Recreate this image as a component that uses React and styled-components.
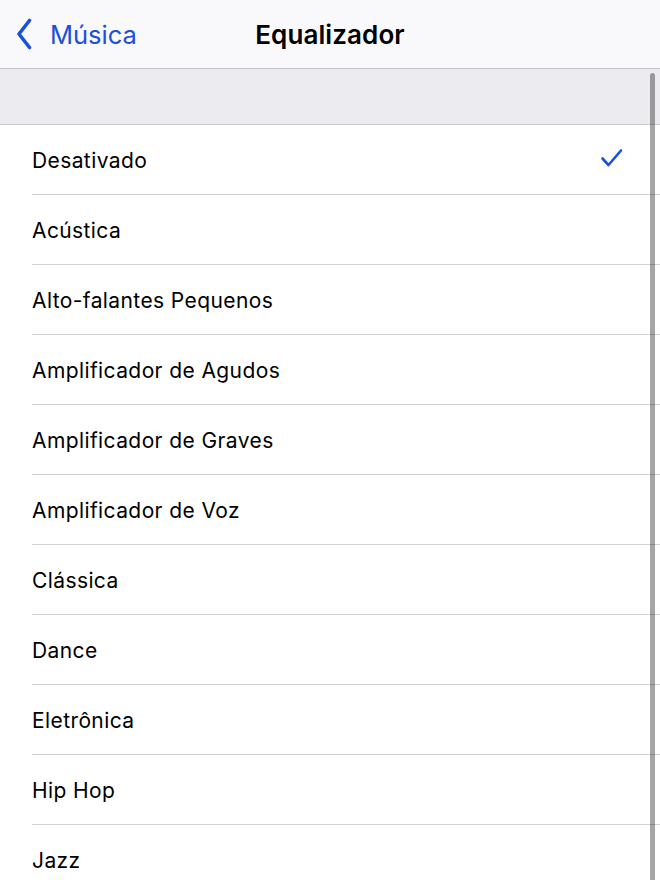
import React from 'react';
import styled, { createGlobalStyle } from 'styled-components';

const presets = [
  'Desativado',
  'Acústica',
  'Alto-falantes Pequenos',
  'Amplificador de Agudos',
  'Amplificador de Graves',
  'Amplificador de Voz',
  'Clássica',
  'Dance',
  'Eletrônica',
  'Hip Hop',
  'Jazz',
];

const GlobalStyle = createGlobalStyle`
  html, body {
    margin: 0;
    padding: 0;
    background: #ffffff;
    overflow: hidden;
  }
  body {
    font-family: Inter, "Noto Sans", sans-serif;
    -webkit-font-smoothing: antialiased;
  }
`;

const App = () => {
  const selected = 'Desativado';

  return (
    <Screen>
      <GlobalStyle />
      <NavBar>
        <BackButton href="#">
          <svg width="16" height="32" viewBox="0 0 16 32" fill="none">
            <path d="M13.5 2.5L3 16L13.5 29.5" stroke="currentColor" strokeWidth="3.6" strokeLinecap="round" strokeLinejoin="round" />
          </svg>
          <span>Música</span>
        </BackButton>
        <Title>Equalizador</Title>
      </NavBar>
      <SectionGap />
      <List>
        {presets.map((name) => (
          <Row key={name}>
            <Label>{name}</Label>
            {name === selected && (
              <Check width="24" height="20" viewBox="0 0 24 20" fill="none">
                <path d="M2.5 10.5L8.5 17L21 2.5" stroke="currentColor" strokeWidth="2.6" strokeLinecap="round" strokeLinejoin="round" />
              </Check>
            )}
          </Row>
        ))}
      </List>
      <ScrollThumb />
    </Screen>
  );
};

export default App;

const Screen = styled.div`
  position: relative;
  width: 660px;
  height: 880px;
  overflow: hidden;
  background: #ffffff;
`;

const NavBar = styled.div`
  position: relative;
  height: 68px;
  display: flex;
  align-items: center;
  justify-content: center;
  background: #f9f9fb;
  border-bottom: 1.5px solid #c6c6c8;
`;

const BackButton = styled.a`
  position: absolute;
  left: 16px;
  top: 0;
  height: 68px;
  display: flex;
  align-items: center;
  gap: 18px;
  color: #1a50dc;
  text-decoration: none;
  font-size: 25.5px;
`;

const Title = styled.h1`
  margin: 0;
  font-size: 26px;
  font-weight: 600;
  color: #000000;
  letter-spacing: 0.1px;
`;

const SectionGap = styled.div`
  height: 55px;
  background: #ebebf0;
  border-bottom: 1px solid #c8c7cc;
`;

const List = styled.div`
  display: flex;
  flex-direction: column;
`;

const Row = styled.div`
  height: 70px;
  margin-left: 32px;
  padding-right: 36px;
  display: flex;
  align-items: center;
  justify-content: space-between;
  border-bottom: 1px solid #d1d1d6;
  box-sizing: border-box;
`;

const Label = styled.span`
  font-size: 21px;
  color: #000000;
  letter-spacing: 0.4px;
  margin-top: 2px;
`;

const Check = styled.svg`
  color: #1a50dc;
  margin-top: -3px;
`;

const ScrollThumb = styled.div`
  position: absolute;
  right: 5px;
  top: 73px;
  bottom: -10px;
  width: 5px;
  border-radius: 3px;
  background: rgba(0, 0, 0, 0.35);
`;
